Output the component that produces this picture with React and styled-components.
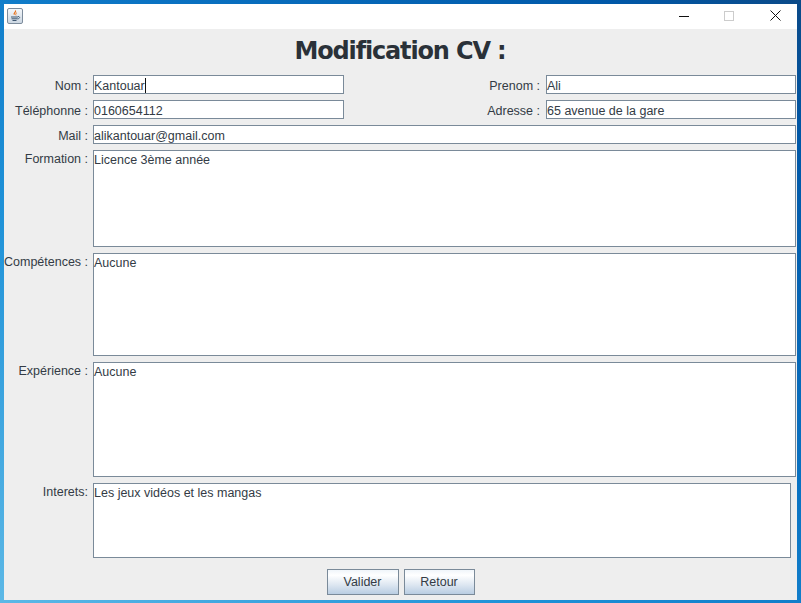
import React from 'react';
import styled, { createGlobalStyle } from 'styled-components';

const Global = createGlobalStyle`
  html, body { margin: 0; padding: 0; width: 801px; height: 603px; overflow: hidden; }
  #root { width: 801px; height: 603px; }
`;

const Frame = styled.div`
  box-sizing: border-box;
  width: 801px;
  height: 603px;
  padding: 4px 4px 3px 4px;
  background: linear-gradient(to top right, #5cb8e6 0%, #1f92d8 32%, #0a72c2 60%, #0058a8 88%, #0b4a88 100%);
  display: flex;
  flex-direction: column;
`;

const TitleBar = styled.div`
  height: 25px;
  flex: none;
  background: #fff;
  display: flex;
  align-items: center;
  justify-content: space-between;
  padding: 0 0 2px 3px;
  box-sizing: border-box;
`;

const AppIcon = styled.div`
  width: 16px;
  height: 16px;
  box-sizing: border-box;
  border: 1px solid #7d8c9c;
  border-radius: 2px;
  background: linear-gradient(#f4f7fa, #ccd7e2);
  display: flex;
  align-items: center;
  justify-content: center;
`;

const WindowButtons = styled.div`
  display: flex;
`;

const WinButton = styled.div`
  width: ${p => p.$w}px;
  height: 22px;
  display: flex;
  align-items: center;
  justify-content: center;
`;

const Body = styled.div`
  flex: 1;
  background: #eeeeee;
  display: flex;
  flex-direction: column;
  font-family: "Liberation Sans", Arial, sans-serif;
  font-size: 12.5px;
  color: #333b45;
`;

const Heading = styled.h1`
  margin: 0;
  height: 46px;
  padding: 4px 1px 0 0;
  box-sizing: border-box;
  text-align: center;
  font-family: "DejaVu Sans", sans-serif;
  font-size: 24px;
  font-weight: 700;
  line-height: 36px;
  letter-spacing: -1.15px;
  color: #2a3138;
`;

const Form = styled.div`
  display: flex;
  flex-direction: column;
  gap: 6px;
  padding-right: 1px;
`;

const Row = styled.div`
  display: flex;
  height: ${p => p.$h}px;
`;

const Label = styled.label`
  flex: none;
  width: ${p => p.$w || 84}px;
  margin-right: ${p => p.$gap || 5}px;
  text-align: right;
  white-space: nowrap;
  line-height: 23px;
`;

const AreaLabel = styled(Label)`
  line-height: 18px;
`;

const Input = styled.div`
  box-sizing: border-box;
  width: ${p => (p.$w ? `${p.$w}px` : 'auto')};
  flex: ${p => (p.$w ? 'none' : '1')};
  margin-right: ${p => p.$mr || 0}px;
  height: 100%;
  background: #fff;
  border: 1px solid #7a8a99;
  line-height: 20px;
  white-space: pre;
`;

const Caret = styled.span`
  display: inline-block;
  width: 1px;
  height: 15px;
  background: #111;
  vertical-align: -3px;
`;

const Area = styled(Input)`
  line-height: 16px;
  padding-top: 1px;
`;

const Actions = styled.div`
  display: flex;
  justify-content: center;
  gap: 5px;
  margin-top: 11px;
`;

const Button = styled.button`
  box-sizing: border-box;
  width: ${p => p.$w}px;
  height: 26px;
  padding: 0;
  border: 1px solid #7a8a99;
  background: linear-gradient(#f0f5fa 0%, #ffffff 22%, #dfe8f2 60%, #b9cde2 100%);
  font-family: "Liberation Sans", Arial, sans-serif;
  font-size: 12.5px;
  color: #333b45;
`;

export default function App() {
  return (
    <>
      <Global />
      <Frame>
        <TitleBar>
          <AppIcon>
            <svg width="14" height="14" viewBox="0 0 14 14" fill="none">
              <path d="M7.5 1.5C8.5 3 5.5 3.8 6.3 5.6 5 4.2 8 3.2 7.5 1.5Z" stroke="#e8701a" strokeWidth="1.1" />
              <path d="M9 3.5C8 4.4 7.2 5 8 6.4" stroke="#e8701a" strokeWidth="0.9" />
              <path d="M3 8h7M3.5 9.8h6M4.5 11.5h4" stroke="#3d5670" strokeWidth="1" />
              <path d="M10 7.5c2.2-.3 2.2 2.2-.5 2.4" stroke="#3d5670" strokeWidth="0.9" />
            </svg>
          </AppIcon>
          <WindowButtons>
            <WinButton $w={42}>
              <svg width="10" height="10" viewBox="0 0 10 10"><path d="M0 5.5h10" stroke="#111" strokeWidth="1" /></svg>
            </WinButton>
            <WinButton $w={48}>
              <svg width="10" height="10" viewBox="0 0 10 10"><rect x="0.5" y="0.5" width="9" height="9" fill="none" stroke="#ccc" /></svg>
            </WinButton>
            <WinButton $w={44}>
              <svg width="11" height="11" viewBox="0 0 11 11"><path d="M0.5 0.5l10 10M10.5 0.5l-10 10" stroke="#111" strokeWidth="1" /></svg>
            </WinButton>
          </WindowButtons>
        </TitleBar>
        <Body>
          <Heading>Modification CV :</Heading>
          <Form>
            <Row $h={19}>
              <Label>Nom :</Label>
              <Input $w={251}>Kantouar<Caret /></Input>
              <Label $w={196} $gap={6}>Prenom :</Label>
              <Input>Ali</Input>
            </Row>
            <Row $h={19}>
              <Label>Téléphonne :</Label>
              <Input $w={251}>0160654112</Input>
              <Label $w={196} $gap={6}>Adresse :</Label>
              <Input>65 avenue de la gare</Input>
            </Row>
            <Row $h={19}>
              <Label>Mail :</Label>
              <Input>alikantouar@gmail.com</Input>
            </Row>
            <Row $h={97}>
              <AreaLabel>Formation :</AreaLabel>
              <Area>Licence 3ème année</Area>
            </Row>
            <Row $h={103}>
              <AreaLabel>Compétences :</AreaLabel>
              <Area>Aucune</Area>
            </Row>
            <Row $h={115}>
              <AreaLabel>Expérience :</AreaLabel>
              <Area>Aucune</Area>
            </Row>
            <Row $h={75}>
              <AreaLabel>Interets:</AreaLabel>
              <Area $mr={5}>Les jeux vidéos et les mangas</Area>
            </Row>
          </Form>
          <Actions>
            <Button $w={72}>Valider</Button>
            <Button $w={71}>Retour</Button>
          </Actions>
        </Body>
      </Frame>
    </>
  );
}
